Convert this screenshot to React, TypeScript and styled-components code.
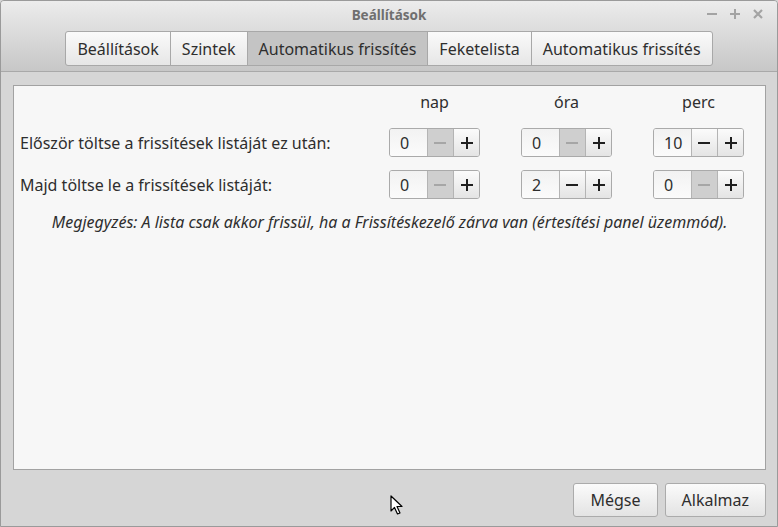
import * as React from 'react';
import styled, { createGlobalStyle } from 'styled-components';

const GlobalStyle = createGlobalStyle`
  html, body {
    margin: 0;
    padding: 0;
    background: #d6d6d6;
  }
  body {
    font-family: 'Noto Sans', 'DejaVu Sans', sans-serif;
    font-size: 16px;
    color: #2e2e2e;
  }
`;

const tabs = [
  'Beállítások',
  'Szintek',
  'Automatikus frissítés',
  'Feketelista',
  'Automatikus frissítés',
];

const rows = [
  { label: 'Először töltse a frissítések listáját ez után:', values: [0, 0, 10] },
  { label: 'Majd töltse le a frissítések listáját:', values: [0, 2, 0] },
];

const units = ['nap', 'óra', 'perc'];

function SpinButton({ value }: { value: number }) {
  const atMin = value <= 0;
  return (
    <Spin>
      <SpinEntry>{value}</SpinEntry>
      <SpinStep disabled={atMin}>
        <svg width="12" height="12" viewBox="0 0 12 12">
          <rect x="0" y="5" width="12" height="2" fill="currentColor" />
        </svg>
      </SpinStep>
      <SpinStep>
        <svg width="12" height="12" viewBox="0 0 12 12">
          <rect x="0" y="5" width="12" height="2" fill="currentColor" />
          <rect x="5" y="0" width="2" height="12" fill="currentColor" />
        </svg>
      </SpinStep>
    </Spin>
  );
}

export default function App() {
  return (
    <>
      <GlobalStyle />
      <Window>
        <HeaderBar>
          <TitleRow>
            <Title>Beállítások</Title>
            <WindowControls>
              <svg width="10" height="10" viewBox="0 0 10 10">
                <rect x="0" y="4" width="10" height="2" fill="currentColor" />
              </svg>
              <svg width="10" height="10" viewBox="0 0 10 10">
                <rect x="0" y="4" width="10" height="2" fill="currentColor" />
                <rect x="4" y="0" width="2" height="10" fill="currentColor" />
              </svg>
              <svg width="10" height="10" viewBox="0 0 10 10">
                <path d="M1 1 L9 9 M9 1 L1 9" stroke="currentColor" strokeWidth="2.2" />
              </svg>
            </WindowControls>
          </TitleRow>
          <TabBar>
            {tabs.map((t, i) => (
              <Tab key={i} active={i === 2}>
                {t}
              </Tab>
            ))}
          </TabBar>
        </HeaderBar>

        <Body>
          <Panel>
            <SettingsGrid>
              <span />
              {units.map((u) => (
                <UnitHeader key={u}>{u}</UnitHeader>
              ))}
              {rows.map((r) => (
                <React.Fragment key={r.label}>
                  <RowLabel>{r.label}</RowLabel>
                  {r.values.map((v, i) => (
                    <SpinButton key={i} value={v} />
                  ))}
                </React.Fragment>
              ))}
            </SettingsGrid>
            <Note>
              Megjegyzés: A lista csak akkor frissül, ha a Frissítéskezelő zárva van
              (értesítési panel üzemmód).
            </Note>
          </Panel>

          <ButtonRow>
            <DialogButton>Mégse</DialogButton>
            <DialogButton>Alkalmaz</DialogButton>
          </ButtonRow>
        </Body>

        <Cursor width="14" height="22" viewBox="0 0 14 22">
          <path
            d="M1 1 L1 16 L4.5 12.5 L7.5 19 L10 18 L7 11.5 L12 11.5 Z"
            fill="#ffffff"
            stroke="#000000"
            strokeWidth="1.2"
            strokeLinejoin="round"
          />
        </Cursor>
      </Window>
    </>
  );
}

const Window = styled.div`
  position: relative;
  box-sizing: border-box;
  width: 778px;
  height: 527px;
  display: flex;
  flex-direction: column;
  border: 1px solid #9a9a9a;
  border-radius: 4px 4px 0 0;
  background: #d6d6d6;
  overflow: hidden;
`;

const HeaderBar = styled.div`
  height: 70px;
  flex-shrink: 0;
  display: flex;
  flex-direction: column;
  background: linear-gradient(to bottom, #ececec, #c7c7c7);
  border-bottom: 1px solid #a9a9a9;
`;

const TitleRow = styled.div`
  position: relative;
  height: 30px;
  display: flex;
  align-items: center;
  justify-content: center;
`;

const Title = styled.div`
  font-size: 13.5px;
  font-weight: bold;
  color: #6f6f6f;
  margin-top: -2px;
`;

const WindowControls = styled.div`
  position: absolute;
  right: 14px;
  top: 8px;
  display: flex;
  gap: 13px;
  color: #a3a3a3;
`;

const TabBar = styled.div`
  display: flex;
  justify-content: center;
`;

const Tab = styled.div<{ active?: boolean }>`
  height: 33px;
  padding: 0 11px;
  display: flex;
  align-items: center;
  border: 1px solid #a8a8a8;
  margin-left: -1px;
  font-size: 16px;
  color: #2e2e2e;
  background: ${({ active }) =>
    active
      ? '#c4c4c4'
      : 'linear-gradient(to bottom, #fafafa, #e6e6e6)'};
  &:first-child {
    border-radius: 3px 0 0 3px;
    margin-left: 0;
  }
  &:last-child {
    border-radius: 0 3px 3px 0;
  }
`;

const Body = styled.div`
  flex: 1;
  display: flex;
  flex-direction: column;
  padding: 13px 11px 9px 12px;
  gap: 13px;
`;

const Panel = styled.div`
  flex: 1;
  background: #f7f7f7;
  border: 1px solid #a2a2a2;
  padding: 5px 21px 0 6px;
`;

const SettingsGrid = styled.div`
  display: grid;
  grid-template-columns: 1fr 91px 91px 91px;
  column-gap: 41px;
  row-gap: 13px;
  align-items: center;
`;

const UnitHeader = styled.div`
  text-align: center;
  font-size: 16px;
  line-height: 22px;
  margin-bottom: 2px;
`;

const RowLabel = styled.div`
  font-size: 16px;
`;

const Spin = styled.div`
  display: flex;
  height: 29px;
  box-sizing: border-box;
  border: 1px solid #aaaaaa;
  border-radius: 3px;
  overflow: hidden;
  background: #f7f7f7;
`;

const SpinEntry = styled.div`
  width: 38px;
  padding-left: 10px;
  box-sizing: border-box;
  display: flex;
  align-items: center;
  font-size: 16px;
  background: linear-gradient(to bottom, #f2f2f2, #fbfbfb);
`;

const SpinStep = styled.div<{ disabled?: boolean }>`
  width: 26px;
  display: flex;
  align-items: center;
  justify-content: center;
  border-left: 1px solid #b4b4b4;
  color: ${({ disabled }) => (disabled ? '#a6a6a6' : '#1f1f1f')};
  background: ${({ disabled }) =>
    disabled ? '#cfcfcf' : 'linear-gradient(to bottom, #fbfbfb, #e4e4e4)'};
`;

const Note = styled.div`
  margin-top: 12px;
  text-align: center;
  font-style: italic;
  font-size: 16px;
  padding-left: 15px;
`;

const ButtonRow = styled.div`
  display: flex;
  justify-content: flex-end;
  gap: 7px;
`;

const DialogButton = styled.div`
  height: 34px;
  box-sizing: border-box;
  padding: 0 16px;
  display: flex;
  align-items: center;
  font-size: 16px;
  border: 1px solid #ababab;
  border-radius: 3px;
  background: linear-gradient(to bottom, #fbfbfb, #e3e3e3);
`;

const Cursor = styled.svg`
  position: absolute;
  left: 389px;
  top: 494px;
`;
